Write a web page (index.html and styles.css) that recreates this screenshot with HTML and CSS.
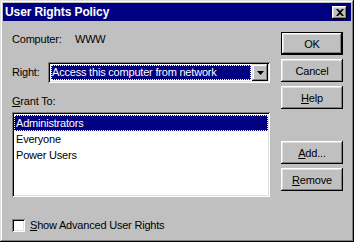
FILE: index.html
```html
<!DOCTYPE html>
<html>
<head>
<meta charset="utf-8">
<title>User Rights Policy</title>
<link rel="stylesheet" href="styles.css">
</head>
<body>
<div class="window">
  <div class="titlebar">
    <span class="title">User Rights Policy</span>
    <span class="close-btn">
      <svg width="8" height="7" viewBox="0 0 8 7"><path d="M0 0h2l2 2 2-2h2L5 3.5 8 7H6L4 5 2 7H0l3-3.5z" fill="#000"/></svg>
    </span>
  </div>
  <div class="dialog-body">
    <div class="fields">
      <div class="computer-row">
        <span class="computer-label">Computer:</span>
        <span>WWW</span>
      </div>
      <div class="right-row">
        <label class="right-label">Ri<u>g</u>ht:</label>
        <div class="combo">
          <div class="combo-text"><span class="combo-sel">Access this computer from network</span></div>
          <div class="combo-btn">
            <svg width="7" height="4" viewBox="0 0 7 4"><path d="M0 0h7L3.5 4z" fill="#000"/></svg>
          </div>
        </div>
      </div>
      <div class="grant-label"><u>G</u>rant To:</div>
      <ul class="listbox">
        <li class="selected">Administrators</li>
        <li>Everyone</li>
        <li>Power Users</li>
      </ul>
      <div class="check-row">
        <span class="checkbox"></span>
        <span><u>S</u>how Advanced User Rights</span>
      </div>
    </div>
    <div class="buttons">
      <button class="btn btn-default">OK</button>
      <button class="btn">Cancel</button>
      <button class="btn"><u>H</u>elp</button>
      <button class="btn btn-add"><u>A</u>dd...</button>
      <button class="btn"><u>R</u>emove</button>
    </div>
  </div>
</div>
</body>
</html>
```

FILE: styles.css
```css
/* 对话框窗口 */
body {margin: 0; background: #000; font-family: "Liberation Sans", Arial, sans-serif; font-size: 11px; letter-spacing: -0.2px; color: #000;}
u {text-decoration: underline; text-underline-offset: 1px;}
.window {width: 354px; height: 242px; box-sizing: border-box; padding: 3px; background: #c0c0c0; box-shadow: inset -1px -1px #000, inset 1px 1px #dfdfdf, inset -2px -2px #808080, inset 2px 2px #fff; display: flex; flex-direction: column;}

/* 标题栏 */
.titlebar {height: 18px; background: #000080; display: flex; align-items: center; justify-content: space-between; padding: 0 4px 0 2px;}
.titlebar .title {color: #fff; font-weight: bold; font-size: 12px; letter-spacing: -0.1px; line-height: 18px;}
.close-btn {width: 15px; height: 13px; background: #c0c0c0; display: flex; align-items: center; justify-content: center; box-shadow: inset -1px -1px #000, inset 1px 1px #fff, inset -2px -2px #808080, inset 2px 2px #dfdfdf;}

/* 内容 */
.dialog-body {display: flex; padding-left: 9px; gap: 11px;}
.fields {width: 258px; display: flex; flex-direction: column;}
.computer-row {margin-top: 12px; height: 13px; line-height: 13px; display: flex;}
.computer-label {width: 63px;}
.right-row {margin-top: 16px; height: 21px; display: flex; align-items: center;}
.right-label {width: 36px; line-height: 13px;}
.combo {width: 222px; height: 21px; box-sizing: border-box; padding: 2px; background: #fff; display: flex; box-shadow: inset 1px 1px #808080, inset -1px -1px #fff, inset 2px 2px #000, inset -2px -2px #dfdfdf;}
.combo-text {flex: 1; padding: 1px 1px 1px 1px; display: flex;}
.combo-sel {flex: 1; background: #000080; color: #fff; border: 1px dotted #fff; line-height: 13px; white-space: nowrap; overflow: hidden;}
.combo-btn {width: 16px; height: 17px; box-sizing: border-box; background: #c0c0c0; display: flex; align-items: center; justify-content: center; box-shadow: inset -1px -1px #000, inset 1px 1px #dfdfdf, inset -2px -2px #808080, inset 2px 2px #fff;}
.combo-btn svg {margin-top: 1px;}
.grant-label {margin-top: 12px; height: 13px; line-height: 13px;}

/* 列表 */
.listbox {list-style: none; margin: 4px 0 0; padding: 3px 2px 2px; height: 85px; box-sizing: border-box; background: #fff; box-shadow: inset 1px 1px #808080, inset -1px -1px #fff, inset 2px 2px #000, inset -2px -2px #dfdfdf;}
.listbox li {height: 16px; line-height: 15px; padding: 1px 2px 0; box-sizing: border-box;}
.listbox li.selected {background: #000080; color: #fff; outline: 1px dotted #fff; outline-offset: -1px;}

.check-row {margin-top: 22px; height: 13px; line-height: 13px; display: flex; align-items: center; gap: 5px;}
.checkbox {width: 13px; height: 13px; box-sizing: border-box; background: #fff; box-shadow: inset 1px 1px #808080, inset -1px -1px #fff, inset 2px 2px #000, inset -2px -2px #dfdfdf;}

/* 按钮 */
.buttons {width: 62px; padding-top: 11px; display: flex; flex-direction: column; gap: 4px;}
.btn {width: 62px; height: 23px; margin: 0; padding: 0; border: 0; background: #c0c0c0; font: inherit; letter-spacing: inherit; color: #000; box-shadow: inset -1px -1px #000, inset 1px 1px #fff, inset -2px -2px #808080, inset 2px 2px #dfdfdf;}
.btn-default {border: 1px solid #000;}
.btn-add {margin-top: 28px;}
```
